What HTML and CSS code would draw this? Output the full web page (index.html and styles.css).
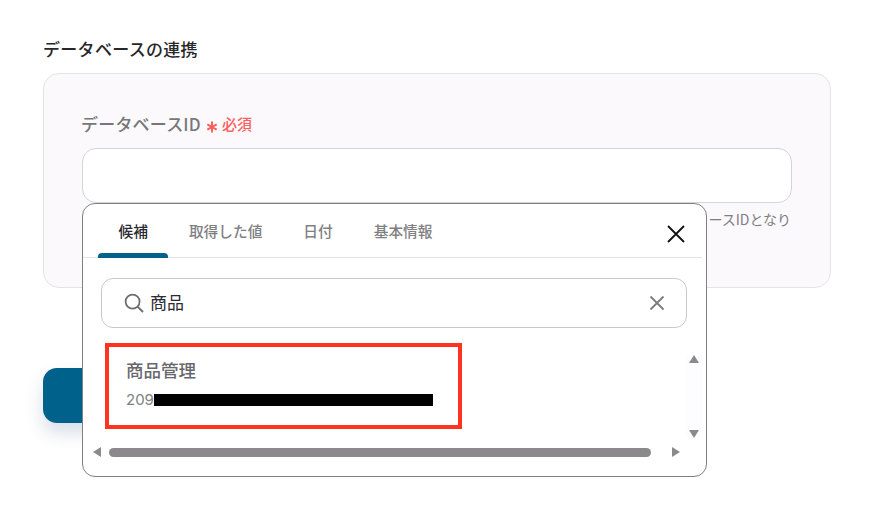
FILE: index.html
```html
<!DOCTYPE html>
<html lang="ja">
<head>
<meta charset="utf-8">
<title>データベースの連携</title>
<link rel="stylesheet" href="styles.css">
</head>
<body>
<main class="page">
  <h2 class="section-title">データベースの連携</h2>
  <section class="card">
    <div class="label-row">
      <span class="label">データベースID</span>
      <svg class="req-star" viewBox="0 0 12 12" width="12" height="12"><path d="M6 .6v10.8M1.3 3.3l9.4 5.4M10.7 3.3l-9.4 5.4" stroke="#fb5f5f" stroke-width="2" fill="none"/></svg>
      <span class="required">必須</span>
    </div>
    <div class="field"></div>
    <p class="hint">ースIDとなり</p>
  </section>
  <div class="submit"></div>

  <div class="popup">
    <div class="tabs">
      <span class="tab active">候補</span>
      <span class="tab">取得した値</span>
      <span class="tab">日付</span>
      <span class="tab">基本情報</span>
      <svg class="close" viewBox="0 0 18 18" width="18" height="18"><path d="M1 1l16 16M17 1L1 17" stroke="#111" stroke-width="1.8" fill="none"/></svg>
    </div>
    <div class="search">
      <svg class="search-icon" viewBox="0 0 20 20" width="20" height="20"><circle cx="8.6" cy="8.6" r="7" stroke="#6f6f6f" stroke-width="1.8" fill="none"/><path d="M13.6 13.6l5.4 5.4" stroke="#6f6f6f" stroke-width="2" fill="none"/></svg>
      <span class="search-text">商品</span>
      <svg class="clear" viewBox="0 0 16 16" width="16" height="16"><path d="M1.5 1.5l13 13M14.5 1.5l-13 13" stroke="#7c7c7c" stroke-width="1.8" fill="none"/></svg>
    </div>
    <div class="results">
      <div class="result">
        <div class="result-name">商品管理</div>
        <div class="result-id"><span>209</span><span class="redact"></span></div>
      </div>
      <div class="vscroll">
        <svg viewBox="0 0 10 8" width="10" height="8"><path d="M5 0l5 8H0z" fill="#8b898c"/></svg>
        <svg viewBox="0 0 10 8" width="10" height="8"><path d="M5 8l5-8H0z" fill="#8b898c"/></svg>
      </div>
    </div>
    <div class="hscroll">
      <svg viewBox="0 0 8 10" width="8" height="10"><path d="M0 5l8-5v10z" fill="#8b898c"/></svg>
      <div class="thumb"></div>
      <svg viewBox="0 0 8 10" width="8" height="10"><path d="M8 5L0 0v10z" fill="#8b898c"/></svg>
    </div>
  </div>
</main>
</body>
</html>
```

FILE: styles.css
```css
* { box-sizing: border-box; }
html, body { margin: 0; height: 100%; background: #fff; overflow: hidden; }
body {
  font-family: "Noto Sans CJK JP", "Noto Sans", sans-serif;
  color: #27272a;
}
.page {
  position: relative;
  width: 878px;
  height: 508px;
  padding: 37px 47px 0 43px;
}
.section-title {
  margin: 0 0 12px;
  font-size: 17px;
  line-height: 24px;
  font-weight: 500;
  letter-spacing: 0.3px;
  color: #27272a;
}
.card {
  height: 215px;
  padding: 38px 38px 0;
  background: #fbf9fc;
  border: 1px solid #e4e3e8;
  border-radius: 16px;
}
.label-row {
  display: flex;
  align-items: center;
  height: 24px;
  margin-bottom: 12px;
}
.label {
  margin-left: -1px;
  font-size: 17px;
  line-height: 24px;
  font-weight: 500;
  letter-spacing: 0.2px;
  color: #77777a;
}
.req-star { margin: 5px 4px 0 5px; }
.required {
  font-size: 15px;
  line-height: 20px;
  font-weight: 500;
  color: #fb5f5f;
}
.field {
  height: 55px;
  background: #fff;
  border: 1px solid #d4d4de;
  border-radius: 14px;
}
.hint {
  margin: 6px 1px 0 0;
  font-size: 14px;
  line-height: 20px;
  color: #7d7d85;
  text-align: right;
}
.submit {
  width: 200px;
  height: 55px;
  margin-top: 80px;
  background: #00618a;
  border-radius: 14px;
  box-shadow: 0 10px 18px rgba(40, 80, 120, 0.18);
}
.popup {
  position: absolute;
  left: 82px;
  top: 203px;
  width: 625px;
  height: 274px;
  background: #fff;
  border: 1px solid #807f84;
  border-radius: 13px;
  display: flex;
  flex-direction: column;
}
.tabs {
  display: flex;
  align-items: center;
  height: 54px;
  margin: 0 4px 0 0;
  padding-left: 15px;
  border-bottom: 1px solid #e4e4e8;
}
.tab {
  position: relative;
  height: 54px;
  padding: 16px 20.5px 0;
  font-size: 14.7px;
  line-height: 22px;
  font-weight: 500;
  color: #808083;
}
.tab.active { color: #2a2a33; }
.tab.active::after {
  content: "";
  position: absolute;
  left: 0;
  right: 0;
  bottom: 0;
  height: 5px;
  background: #00618a;
  border-radius: 4px 4px 0 0;
}
.close { margin: 6px 17px 0 auto; }
.search {
  display: flex;
  align-items: center;
  height: 50px;
  margin: 20px 19px 0 18px;
  padding: 0 21px 0 22px;
  border: 1px solid #c9c9cc;
  border-radius: 12px;
}
.search-icon { margin-right: 6px; }
.search-text {
  flex: 1;
  padding-bottom: 2px;
  font-size: 17px;
  line-height: 22px;
  color: #2a2a33;
}
.results {
  display: flex;
  justify-content: space-between;
  margin-top: 15px;
}
.result {
  width: 357px;
  height: 86px;
  margin-left: 22px;
  padding: 11px 17px 0;
  border: 4px solid #ff3320;
}
.result-name {
  font-size: 17.5px;
  line-height: 24px;
  font-weight: 500;
  color: #68686c;
}
.result-id {
  display: flex;
  align-items: center;
  margin-top: 8px;
  font-family: "Inter", "Noto Sans", sans-serif;
  font-size: 15px;
  line-height: 20px;
  color: #808084;
}
.redact {
  width: 279px;
  height: 12px;
  background: #000;
}
.vscroll {
  display: flex;
  flex-direction: column;
  justify-content: space-between;
  align-items: center;
  width: 18px;
  height: 83px;
  margin: 12px 3px 0 0;
  background: #fdfcfe;
}
.hscroll {
  display: flex;
  align-items: center;
  height: 16px;
  margin: 6px 22px 0 10px;
}
.thumb {
  width: 542px;
  height: 9px;
  margin: 0 21px 0 8px;
  background: #8b898c;
  border-radius: 5px;
}
```
